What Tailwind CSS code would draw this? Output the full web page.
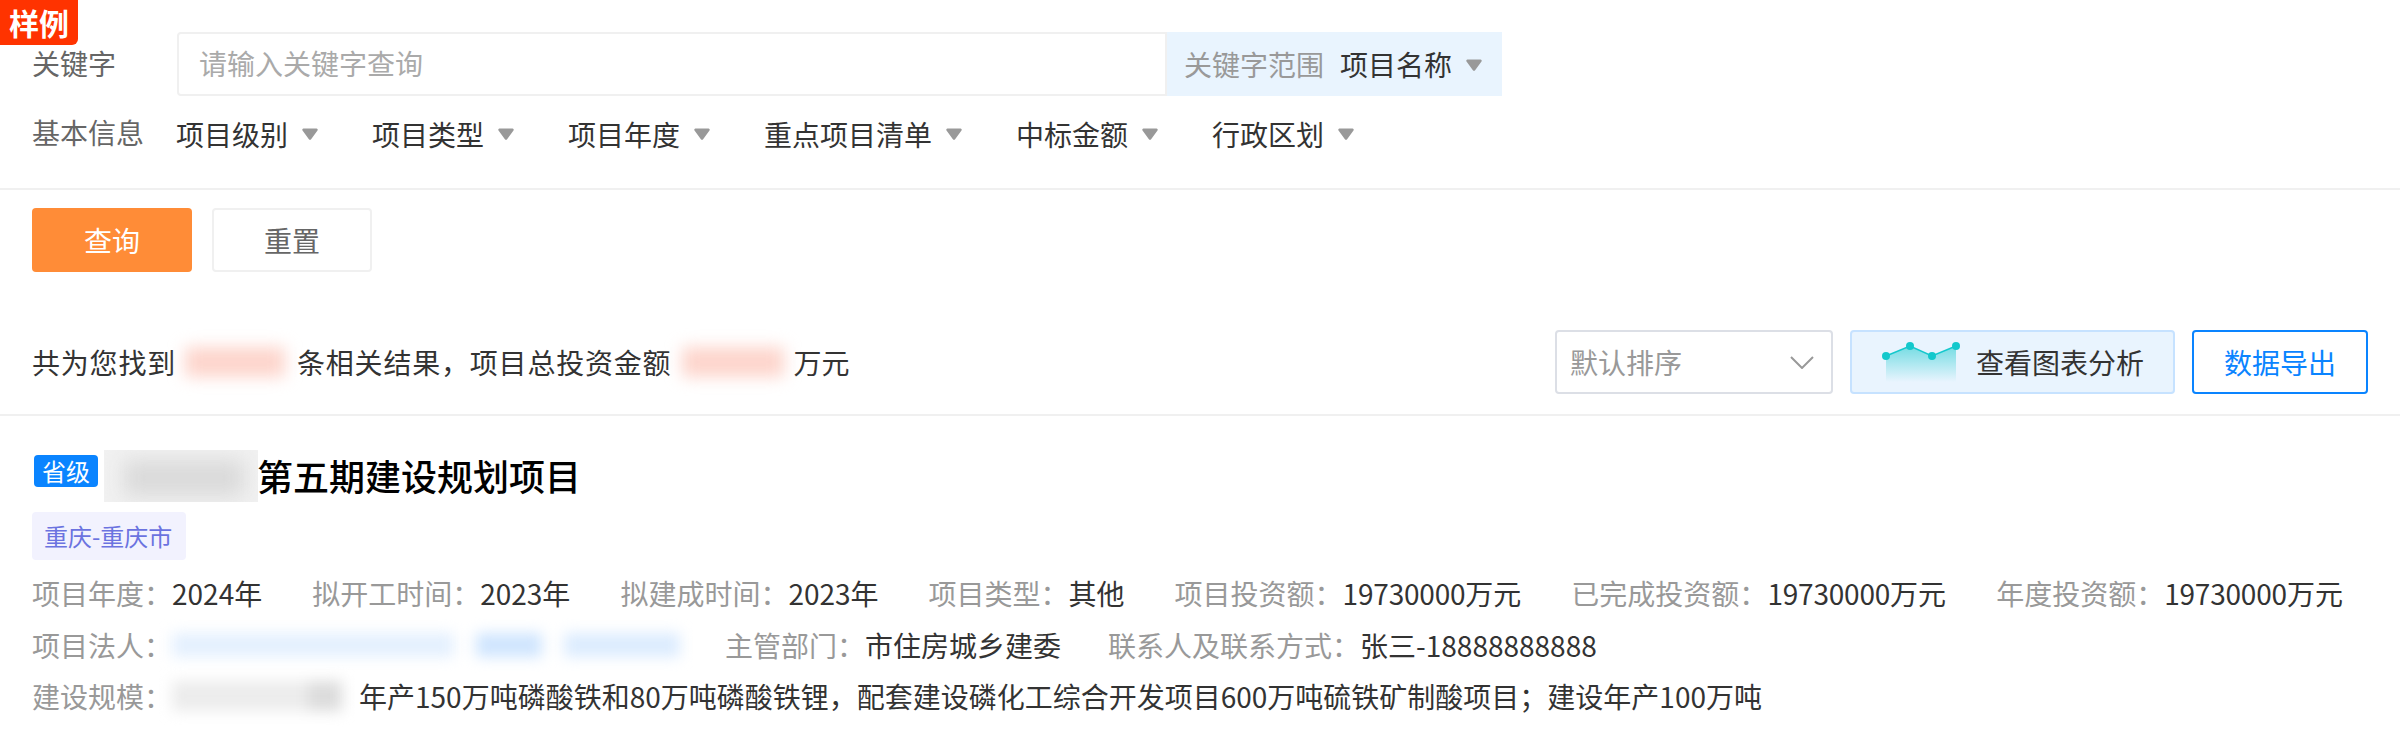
<!DOCTYPE html>
<html lang="zh-CN">
<head>
    <meta charset="UTF-8">
    <title>项目查询</title>
    <script src="https://cdn.jsdelivr.net/npm/@tailwindcss/browser@4"></script>
</head>
<body class="bg-white font-['Noto_Sans_CJK_SC','Noto_Sans',sans-serif] text-[28px] text-[#333]">
    <div class="relative w-[2400px] h-[742px] overflow-hidden">
        <!-- sample badge -->
        <div class="absolute left-0 top-0 w-[78px] h-[45px] bg-[#ff3300] rounded-br-[6px] text-white text-[30px] font-bold leading-[45px] text-center">样例</div>

        <!-- filters -->
        <div class="pt-[32px] pl-[32px]">
            <div class="flex items-center h-[64px]">
                <div class="w-[145px] text-[#666] -mt-[2px]">关键字</div>
                <div class="w-[990px] h-[64px] border-2 border-[#f0f0f0] rounded-l-[4px] pl-[20px] pb-[2px] flex items-center text-[#aaa]">请输入关键字查询</div>
                <div class="w-[335px] h-[64px] bg-[#e9f4fe] pl-[17px] flex items-center">
                    <span class="text-[#999]">关键字范围</span>
                    <span class="ml-[16px]">项目名称</span>
                    <svg class="ml-[14px] mt-[2px]" width="16" height="12" viewBox="0 0 16 12"><path d="M1.5 0.5h13a1.2 1.2 0 0 1 1 1.9l-6.4 8.8a1.3 1.3 0 0 1-2.2 0L0.5 2.4a1.2 1.2 0 0 1 1-1.9z" fill="#999"/></svg>
                </div>
            </div>
            <div class="flex items-center h-[56px] mt-[10px]">
                <div class="w-[144px] text-[#666] -mt-[4px]">基本信息</div>
                <div class="flex items-center gap-[54px]">
                    <div class="flex items-center gap-[14px]">项目级别<svg width="16" height="12" viewBox="0 0 16 12" class="-mt-[1px]"><path d="M1.5 0.5h13a1.2 1.2 0 0 1 1 1.9l-6.4 8.8a1.3 1.3 0 0 1-2.2 0L0.5 2.4a1.2 1.2 0 0 1 1-1.9z" fill="#999"/></svg></div>
                    <div class="flex items-center gap-[14px]">项目类型<svg width="16" height="12" viewBox="0 0 16 12" class="-mt-[1px]"><path d="M1.5 0.5h13a1.2 1.2 0 0 1 1 1.9l-6.4 8.8a1.3 1.3 0 0 1-2.2 0L0.5 2.4a1.2 1.2 0 0 1 1-1.9z" fill="#999"/></svg></div>
                    <div class="flex items-center gap-[14px]">项目年度<svg width="16" height="12" viewBox="0 0 16 12" class="-mt-[1px]"><path d="M1.5 0.5h13a1.2 1.2 0 0 1 1 1.9l-6.4 8.8a1.3 1.3 0 0 1-2.2 0L0.5 2.4a1.2 1.2 0 0 1 1-1.9z" fill="#999"/></svg></div>
                    <div class="flex items-center gap-[14px]">重点项目清单<svg width="16" height="12" viewBox="0 0 16 12" class="-mt-[1px]"><path d="M1.5 0.5h13a1.2 1.2 0 0 1 1 1.9l-6.4 8.8a1.3 1.3 0 0 1-2.2 0L0.5 2.4a1.2 1.2 0 0 1 1-1.9z" fill="#999"/></svg></div>
                    <div class="flex items-center gap-[14px]">中标金额<svg width="16" height="12" viewBox="0 0 16 12" class="-mt-[1px]"><path d="M1.5 0.5h13a1.2 1.2 0 0 1 1 1.9l-6.4 8.8a1.3 1.3 0 0 1-2.2 0L0.5 2.4a1.2 1.2 0 0 1 1-1.9z" fill="#999"/></svg></div>
                    <div class="flex items-center gap-[14px]">行政区划<svg width="16" height="12" viewBox="0 0 16 12" class="-mt-[1px]"><path d="M1.5 0.5h13a1.2 1.2 0 0 1 1 1.9l-6.4 8.8a1.3 1.3 0 0 1-2.2 0L0.5 2.4a1.2 1.2 0 0 1 1-1.9z" fill="#999"/></svg></div>
                </div>
            </div>
        </div>
        <div class="h-[2px] bg-[#f0f0f0] mt-[26px]"></div>

        <!-- buttons -->
        <div class="flex gap-[20px] pl-[32px] mt-[18px]">
            <div class="w-[160px] h-[64px] bg-[#ff8c37] rounded-[4px] text-white flex items-center justify-center">查询</div>
            <div class="w-[160px] h-[64px] border-2 border-[#f0f0f0] rounded-[4px] text-[#666] flex items-center justify-center">重置</div>
        </div>

        <!-- result summary -->
        <div class="flex items-center justify-between pl-[32px] pr-[32px] mt-[58px] h-[64px]">
            <div class="flex items-center">
                <span class="tracking-[0.8px]">共为您找到</span>
                <div class="w-[100px] h-[30px] ml-[9px] mr-[12px] bg-[#fdd5cc] blur-[8px]"></div>
                <span class="tracking-[0.8px]">条相关结果，项目总投资金额</span>
                <div class="w-[102px] h-[30px] ml-[11px] mr-[9px] bg-[#fdd5cc] blur-[8px]"></div>
                <span>万元</span>
            </div>
            <div class="flex items-center">
                <div class="w-[278px] h-[64px] border-2 border-[#dcdfe6] rounded-[4px] pl-[13px] pr-[17px] flex items-center justify-between text-[#999]">
                    默认排序
                    <svg width="24" height="13" viewBox="0 0 24 13" fill="none"><path d="M1 1L12 12L23 1" stroke="#999" stroke-width="2"/></svg>
                </div>
                <div class="w-[325px] h-[64px] ml-[17px] border-2 border-[#c6e2ff] rounded-[4px] bg-[#e9f4fe] pl-[30px] flex items-center">
                    <svg width="80" height="40" viewBox="0 0 80 40">
                        <defs>
                            <linearGradient id="area" x1="0" y1="0" x2="0" y2="1">
                                <stop offset="0" stop-color="#14c8cc" stop-opacity="0.55"/>
                                <stop offset="1" stop-color="#14c8cc" stop-opacity="0"/>
                            </linearGradient>
                        </defs>
                        <path d="M4 14L28 4L50 14L74 4V40H4z" fill="url(#area)"/>
                        <path d="M4 14L28 4L50 14L74 4" fill="none" stroke="#14c8cc" stroke-width="1.5"/>
                        <circle cx="4" cy="14" r="4" fill="#14c8cc"/>
                        <circle cx="28" cy="4" r="4" fill="#14c8cc"/>
                        <circle cx="50" cy="14" r="4" fill="#14c8cc"/>
                        <circle cx="74" cy="4" r="4" fill="#14c8cc"/>
                    </svg>
                    <span class="ml-[14px]">查看图表分析</span>
                </div>
                <div class="w-[176px] h-[64px] ml-[17px] border-2 border-[#0a84ff] rounded-[4px] text-[#0a84ff] flex items-center justify-center">数据导出</div>
            </div>
        </div>
        <div class="h-[2px] bg-[#f0f0f0] mt-[20px]"></div>

        <!-- result card -->
        <div class="pl-[32px] pt-[34px]">
            <div class="flex items-center h-[52px]">
                <div class="w-[64px] h-[32px] ml-[2px] -mt-[10px] bg-[#0a84ff] rounded-[4px] text-white text-[24px] leading-[32px] text-center">省级</div>
                <div class="w-[154px] h-[52px] ml-[6px] overflow-hidden bg-[#f1f1f1]">
                    <div class="w-[120px] h-[36px] mt-[10px] ml-[20px] bg-[#dadada] blur-[10px]"></div>
                </div>
                <div class="text-[36px] font-medium text-black -ml-[1px] -mt-[2px]">第五期建设规划项目</div>
            </div>
            <div class="w-[154px] h-[48px] mt-[10px] bg-[#f2f2fe] rounded-[4px] text-[#6b73e0] text-[24px] leading-[48px] pl-[12px]">重庆-重庆市</div>
            <div class="flex gap-[50px] mt-[7px] h-[52px] items-center text-[#333]">
                <div><span class="text-[#999]">项目年度：</span>2024年</div>
                <div><span class="text-[#999]">拟开工时间：</span>2023年</div>
                <div><span class="text-[#999]">拟建成时间：</span>2023年</div>
                <div><span class="text-[#999]">项目类型：</span>其他</div>
                <div><span class="text-[#999]">项目投资额：</span><span class="tracking-[-0.2px]">19730000</span>万元</div>
                <div><span class="text-[#999]">已完成投资额：</span><span class="tracking-[-0.2px]">19730000</span>万元</div>
                <div><span class="text-[#999]">年度投资额：</span><span class="tracking-[-0.2px]">19730000</span>万元</div>
            </div>
            <div class="flex items-center h-[52px] text-[#333]">
                <span class="text-[#999]">项目法人：</span>
                <div class="flex w-[508px] h-[24px] gap-[22px] blur-[7px]">
                    <div class="w-[282px] bg-[#e4f0fe]"></div>
                    <div class="w-[66px] bg-[#cfe5fe]"></div>
                    <div class="w-[116px] bg-[#dcecfe]"></div>
                </div>
                <span class="ml-[45px] text-[#999]">主管部门：</span>
                <span>市住房城乡建委</span>
                <span class="ml-[47px] text-[#999]">联系人及联系方式：</span>
                <span>张三-18888888888</span>
            </div>
            <div class="flex items-center h-[52px] -mt-[1px] text-[#333]">
                <span class="text-[#999]">建设规模：</span>
                <div class="flex w-[170px] h-[30px] blur-[7px]">
                    <div class="w-[136px] bg-[#ececec]"></div>
                    <div class="w-[34px] bg-[#dcdcdc]"></div>
                </div>
                <span class="ml-[17px]">年产150万吨磷酸铁和80万吨磷酸铁锂，配套建设磷化工综合开发项目600万吨硫铁矿制酸项目；建设年产100万吨</span>
            </div>
        </div>
    </div>
</body>
</html>
